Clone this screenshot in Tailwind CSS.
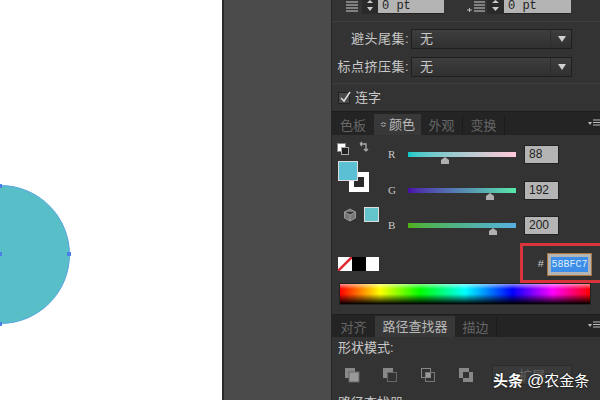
<!DOCTYPE html>
<html lang="zh">
<head>
<meta charset="UTF-8">
<title>颜色面板</title>
<script src="https://cdn.jsdelivr.net/npm/@tailwindcss/browser@4"></script>
</head>
<body class="m-0 bg-white">
<div class="relative flex w-[600px] h-[400px] overflow-hidden font-['Liberation_Sans','Noto_Sans_CJK_SC',sans-serif]">

  <!-- canvas -->
  <div class="relative w-[222px] h-full bg-white shrink-0">
    <div class="absolute left-[-70px] top-[185px] w-[140px] h-[139px] rounded-full bg-[#58bfc8] border border-[#5aa6e0]"></div>
    <div class="absolute left-[67px] top-[252px] w-1 h-1 bg-[#4a80e8]"></div>
    <div class="absolute left-[-2px] top-[252px] w-1 h-1 bg-[#4a80e8]"></div>
    <div class="absolute left-[-2px] top-[184px] w-1 h-1 bg-[#4a80e8]"></div>
    <div class="absolute left-[-2px] top-[322px] w-1 h-1 bg-[#4a80e8]"></div>
  </div>
  <div class="w-0.5 h-full bg-[#2a2a2a] shrink-0"></div>
  <div class="w-[107px] h-full bg-[#4b4b4b] shrink-0"></div>

  <!-- panel -->
  <div class="flex flex-col w-[269px] h-full bg-[#333333] border-l border-[#262626] text-[#c8c8c8] text-[13px] leading-none">

    <!-- paragraph spacing row -->
    <div class="flex h-[22px] border-b border-[#3d3d3d] shrink-0">
      <div class="flex h-[14px] w-[100px] ml-[12px] mr-[21px] shrink-0">
        <svg width="18" height="14" viewBox="0 0 18 14" class="shrink-0"><path d="M2 2h12M2 5h12M2 8h12M2 11h12" stroke="#9a9a9a" stroke-width="1.500"/></svg>
        <div class="flex flex-col items-center w-4 shrink-0 bg-[#2a2a2a]">
          <svg width="16" height="4" viewBox="0 0 16 4"><path d="M5 3h6L8 0z" fill="#ccc"/></svg>
          <svg width="16" height="8" viewBox="0 0 16 8" class="mt-[2px]"><path d="M5 1h6l-3 4z" fill="#ccc"/></svg>
        </div>
        <div class="w-[66px] bg-[#b4b4b4] border-b border-[#222] text-[#222] font-['Liberation_Mono',monospace] text-[12px] pl-1">0 pt</div>
      </div>
      <div class="flex h-[14px] w-[106px] shrink-0">
        <svg width="22" height="14" viewBox="0 0 22 14" class="shrink-0"><path d="M9 2h11M9 5h11M9 8h11M9 11h11" stroke="#9a9a9a" stroke-width="1.500"/><path d="M2 10h5M4.500 8v4" stroke="#b8b8b8"/></svg>
        <div class="flex flex-col items-center w-[17px] shrink-0 bg-[#2a2a2a]">
          <svg width="17" height="4" viewBox="0 0 17 4"><path d="M5 3h7L8.500 0z" fill="#ccc"/></svg>
          <svg width="17" height="8" viewBox="0 0 17 8" class="mt-[2px]"><path d="M5 1h7L8.500 5z" fill="#ccc"/></svg>
        </div>
        <div class="w-[67px] bg-[#b4b4b4] border-b border-[#222] text-[#222] font-['Liberation_Mono',monospace] text-[12px] pl-1">0 pt</div>
      </div>
    </div>

    <!-- dropdowns -->
    <div class="flex flex-col gap-[9px] h-[62px] pt-[7px] border-b border-[#3d3d3d] shrink-0">
      <div class="flex items-center h-[19px]">
        <span class="w-[77px] text-right tracking-[0.5px]">避头尾集:</span>
        <div class="flex items-center w-[161px] h-[20px] ml-[2px] pl-[8px] bg-gradient-to-b from-[#3e3e3e] to-[#303030] border border-[#1f1f1f]">
          <span class="flex-1">无</span><span class="w-px h-[17px] bg-[#2c2c2c] mr-[7px]"></span>
          <svg width="8" height="6" viewBox="0 0 8 6" class="mr-[5px]"><path d="M0 0h8l-4 6z" fill="#d0d0d0"/></svg>
        </div>
      </div>
      <div class="flex items-center h-[19px]">
        <span class="w-[77px] text-right tracking-[0.5px]">标点挤压集:</span>
        <div class="flex items-center w-[161px] h-[20px] ml-[2px] pl-[8px] bg-gradient-to-b from-[#3e3e3e] to-[#303030] border border-[#1f1f1f]">
          <span class="flex-1">无</span><span class="w-px h-[17px] bg-[#2c2c2c] mr-[7px]"></span>
          <svg width="8" height="6" viewBox="0 0 8 6" class="mr-[5px]"><path d="M0 0h8l-4 6z" fill="#d0d0d0"/></svg>
        </div>
      </div>
    </div>

    <!-- ligature -->
    <div class="flex items-center gap-[5px] h-[27px] pl-[6px] shrink-0">
      <div class="relative w-3 h-3 bg-[#4a4a4a] border border-[#222]">
        <svg width="14" height="14" viewBox="0 0 14 14" class="absolute left-[-1px] top-[-3px]"><path d="M3 8l3 3 6-9" fill="none" stroke="#e0e0e0" stroke-width="1.500"/></svg>
      </div>
      <span>连字</span>
    </div>

    <!-- color tabs -->
    <div class="flex items-end justify-between h-[24px] bg-[#242424] border-t border-[#1c1c1c] shrink-0">
      <div class="flex items-end h-full">
        <span class="flex items-center justify-center w-[42px] h-[20px] text-[#666666]">色板</span>
        <span class="flex items-center justify-center w-[47px] h-[21px] bg-[#383838] text-[#b8b8b8]"><span class="text-[8px] mr-[2px]">≎</span>颜色</span>
        <span class="flex items-center justify-center w-[42px] h-[20px] text-[#666666] border-r border-[#1c1c1c]">外观</span>
        <span class="flex items-center justify-center w-[42px] h-[20px] text-[#666666] border-r border-[#1c1c1c]">变换</span>
      </div>
      <svg width="12" height="8" viewBox="0 0 12 8" class="mb-2"><path d="M0 3h4l-2 3z" fill="#bbb"/><path d="M5 1h7M5 3.500h7M5 6h7" stroke="#bbb"/></svg>
    </div>

    <!-- color panel -->
    <div class="relative flex flex-col h-[180px] border-b border-[#1f1f1f] shrink-0">
      <div class="flex h-[122px] shrink-0">
        <!-- fill / stroke column -->
        <div class="relative w-[56px] shrink-0">
          <div class="absolute left-[5px] top-[8px] w-[9px] h-[9px] bg-white border border-[#888]"></div>
          <div class="absolute left-[9px] top-[12px] w-[8px] h-[8px] bg-[#222] border border-[#aaa]"></div>
          <svg width="12" height="12" viewBox="0 0 12 12" class="absolute left-[27px] top-[6px]"><path d="M1 3h6v7M7 10l-2-2M7 10l2-2M1 3l2-2M1 3l2 2" fill="none" stroke="#aaa" stroke-width="1.300"/></svg>
          <div class="absolute left-[17px] top-[37px] w-5 h-5 border-[5px] border-white bg-[#2a2a2a]"></div>
          <div class="absolute left-[6px] top-[26px] w-5 h-5 bg-[#5cc0d4] border border-[#ddd]"></div>
          <svg width="14" height="14" viewBox="0 0 14 14" class="absolute left-[11px] top-[73px]"><path d="M7 1l5.500 3v6L7 13l-5.500-3V4zM1.500 4L7 7l5.500-3M7 7v6" fill="#777" stroke="#9a9a9a"/></svg>
          <div class="absolute left-[32px] top-[72px] w-[15px] h-[15px] bg-[#63c4cb] border border-[#ddd]"></div>
        </div>

        <!-- sliders -->
        <div class="flex flex-col flex-1 pt-[10px] gap-[16.500px] font-['Liberation_Serif',serif]">
          <div class="flex h-[19px]">
            <span class="w-[20px] pt-[4px] text-[11px]">R</span>
            <div class="relative w-[108px] h-[5px] mt-[7px] bg-gradient-to-r from-[#00c8c8] to-[#ffc8d8]">
              <svg width="8" height="7" viewBox="0 0 8 7" class="absolute left-[33px] top-[5px]"><path d="M0 7V3l4-3 4 3v4z" fill="#b0b0b0"/></svg>
            </div>
            <div class="w-[35px] h-[19px] ml-[8px] pl-[4px] pt-[2px] bg-[#b4b4b4] border border-[#222] text-[#222] text-[12px] font-['Liberation_Sans',sans-serif]">88</div>
          </div>
          <div class="flex h-[19px]">
            <span class="w-[20px] pt-[4px] text-[11px]">G</span>
            <div class="relative w-[108px] h-[5px] mt-[7px] bg-gradient-to-r from-[#4a08a8] to-[#58e8a8]">
              <svg width="8" height="7" viewBox="0 0 8 7" class="absolute left-[78px] top-[5px]"><path d="M0 7V3l4-3 4 3v4z" fill="#b0b0b0"/></svg>
            </div>
            <div class="w-[35px] h-[19px] ml-[8px] pl-[4px] pt-[2px] bg-[#b4b4b4] border border-[#222] text-[#222] text-[12px] font-['Liberation_Sans',sans-serif]">192</div>
          </div>
          <div class="flex h-[19px]">
            <span class="w-[20px] pt-[4px] text-[11px]">B</span>
            <div class="relative w-[108px] h-[5px] mt-[7px] bg-gradient-to-r from-[#50b010] to-[#58b0e0]">
              <svg width="8" height="7" viewBox="0 0 8 7" class="absolute left-[81px] top-[5px]"><path d="M0 7V3l4-3 4 3v4z" fill="#b0b0b0"/></svg>
            </div>
            <div class="w-[35px] h-[19px] ml-[8px] pl-[4px] pt-[2px] bg-[#b4b4b4] border border-[#222] text-[#222] text-[12px] font-['Liberation_Sans',sans-serif]">200</div>
          </div>
        </div>
      </div>

      <!-- swatches -->
      <div class="flex items-start h-[26px] shrink-0">
        <div class="flex ml-[6px] h-[14px]">
          <svg width="14" height="14" viewBox="0 0 14 14"><rect width="14" height="14" fill="#fff"/><path d="M0 14L14 0" stroke="#e02530" stroke-width="2.500"/></svg>
          <span class="w-[14px] bg-black"></span>
          <span class="w-[13px] bg-white"></span>
        </div>
      </div>
      <!-- red callout drawn in the screenshot -->
      <div class="absolute left-[188px] top-[108px] flex items-center justify-end w-[80px] h-[40px] border-[3px] border-r-0 border-[#d9343a] pt-[3px] pr-[8px]">
        <span class="text-[11px] mr-[3px] font-['Liberation_Mono',monospace]">#</span>
        <div class="flex items-center justify-center w-[45px] h-[23px] bg-[#b4b4b4] border border-[#a8753f]">
          <span class="block w-[37px] bg-[#3d8ee8] text-[#dcecff] text-[10px] text-center leading-[15px] font-['Liberation_Mono',monospace] whitespace-nowrap">58BFC7</span>
        </div>
      </div>
      <div class="w-[252px] h-[22px] ml-[7px] border border-[#222] bg-[linear-gradient(to_bottom,#ffffff88,transparent_25%,transparent_50%,#000),linear-gradient(to_right,#f00,#ff0_16%,#0f0_32%,#0ff_50%,#00f_69%,#f0f_85%,#f00)]"></div>
    </div>

    <!-- pathfinder tabs -->
    <div class="flex items-end justify-between h-[22px] bg-[#242424] shrink-0">
      <div class="flex items-end h-full">
        <span class="flex items-center justify-center w-[43px] h-[20px] text-[#666666]">对齐</span>
        <span class="flex items-center justify-center w-[80px] h-[21px] bg-[#383838] text-[#b8b8b8]">路径查找器</span>
        <span class="flex items-center justify-center w-[42px] h-[20px] text-[#666666] border-r border-[#1c1c1c]">描边</span>
      </div>
      <svg width="12" height="8" viewBox="0 0 12 8" class="mb-2"><path d="M0 3h4l-2 3z" fill="#bbb"/><path d="M5 1h7M5 3.500h7M5 6h7" stroke="#bbb"/></svg>
    </div>

    <!-- pathfinder -->
    <div class="flex flex-col flex-1 pl-[6px] pt-[4px]">
      <span class="h-[15px]">形状模式:</span>
      <div class="flex items-center h-[32px] mt-[3px] pl-[6px]">
        <svg width="16" height="16" viewBox="0 0 16 16"><rect x="1" y="1" width="10" height="10" fill="#888"/><rect x="5" y="5" width="10" height="10" fill="#999" stroke="#666"/></svg>
        <svg width="16" height="16" viewBox="0 0 16 16" class="ml-[22px]"><path d="M1 1h10v4H5v6H1z" fill="#888"/><rect x="5.500" y="5.500" width="9" height="9" fill="none" stroke="#666"/></svg>
        <svg width="16" height="16" viewBox="0 0 16 16" class="ml-[22px]"><rect x="1.500" y="1.500" width="9" height="9" fill="none" stroke="#888"/><rect x="5.500" y="5.500" width="9" height="9" fill="none" stroke="#777"/><rect x="6" y="6" width="4" height="4" fill="#999"/></svg>
        <svg width="16" height="16" viewBox="0 0 16 16" class="ml-[22px]"><path d="M1 1h10v4H5v6H1zM11 5h4v10H5v-4h6z" fill="#888"/></svg>
        <div class="flex items-center justify-center w-[80px] h-[20px] ml-[18px] bg-[#3a3a3a] border border-[#2c2c2c] text-[#666]">扩展</div>
      </div>
      <span class="mt-[5px]">路径查找器:</span>
    </div>
  </div>

  <!-- watermark -->
  <div class="absolute left-[493px] top-[372px] flex items-center text-white text-[15px] leading-none [text-shadow:0_0_2px_#000]">
    <span class="font-bold">头条</span><span class="ml-[4px] text-[17px]">@</span><span>农金条</span>
  </div>
</div>
</body>
</html>
